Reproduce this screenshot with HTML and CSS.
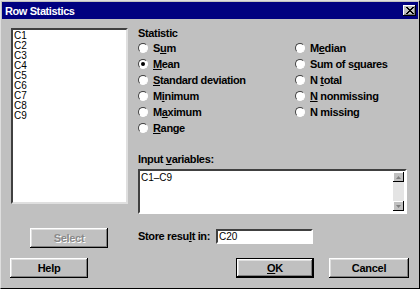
FILE: index.html
```html
<!DOCTYPE html>
<html lang="en">
<head>
    <meta charset="UTF-8">
    <title>Row Statistics</title>
    <link rel="stylesheet" href="styles.css">
</head>
<body>
    <div class="window">
        <div class="titlebar">
            <span class="title">Row Statistics</span>
            <span class="close">
                <svg width="8" height="7" viewBox="0 0 8 7"><path d="M0 0 L7 7 M1 0 L8 7 M7 0 L0 7 M8 0 L1 7" stroke="#000" stroke-width="1"/></svg>
            </span>
        </div>
        <div class="content">
            <div class="left">
                <div class="listbox">
                    <div>C1</div><div>C2</div><div>C3</div><div>C4</div><div>C5</div>
                    <div>C6</div><div>C7</div><div>C8</div><div>C9</div>
                </div>
                <div class="btn select">Select</div>
            </div>
            <div class="right">
                <div class="label">Statistic</div>
                <div class="radios">
                    <div class="radio"><span class="dot"></span><span>S<u>u</u>m</span></div>
                    <div class="radio"><span class="dot"></span><span>M<u>e</u>dian</span></div>
                    <div class="radio"><span class="dot on"></span><span><u>M</u>ean</span></div>
                    <div class="radio"><span class="dot"></span><span>Sum of s<u>q</u>uares</span></div>
                    <div class="radio"><span class="dot"></span><span><u>S</u>tandard deviation</span></div>
                    <div class="radio"><span class="dot"></span><span>N <u>t</u>otal</span></div>
                    <div class="radio"><span class="dot"></span><span>M<u>i</u>nimum</span></div>
                    <div class="radio"><span class="dot"></span><span><u>N</u> nonmissing</span></div>
                    <div class="radio"><span class="dot"></span><span>M<u>a</u>ximum</span></div>
                    <div class="radio"><span class="dot"></span><span>N missing</span></div>
                    <div class="radio"><span class="dot"></span><span><u>R</u>ange</span></div>
                </div>
                <div class="label vars">Input <u>v</u>ariables:</div>
                <div class="field textarea">
                    <span class="value">C1&ndash;C9</span>
                    <div class="scroll">
                        <div class="arrow"><svg width="5" height="3" viewBox="0 0 5 3"><path d="M2.5 0 L5 3 L0 3 Z" fill="#808080"/></svg></div>
                        <div class="arrow"><svg width="5" height="3" viewBox="0 0 5 3"><path d="M0 0 L5 0 L2.5 3 Z" fill="#808080"/></svg></div>
                    </div>
                </div>
                <div class="store">
                    <span class="label">Store resu<u>l</u>t in:</span>
                    <div class="field small">C20</div>
                </div>
            </div>
        </div>
        <div class="footer">
            <div class="btn">Help</div>
            <div class="btn ok"><u>O</u>K</div>
            <div class="btn cancel">Cancel</div>
        </div>
    </div>
</body>
</html>
```

FILE: styles.css
```css
body {
    margin: 0;
    background: #c0c0c0;
    font-family: "Liberation Sans", Arial, sans-serif;
    font-size: 11px;
    color: #000;
}
.window {
    width: 420px;
    height: 289px;
    box-sizing: border-box;
    border: 1px solid;
    border-color: #dfdfdf #000 #000 #dfdfdf;
    display: flex;
    flex-direction: column;
}
.titlebar {
    height: 17px;
    margin: 1px 1px 0 1px;
    background: #000080;
    color: #fff;
    font-weight: bold;
    font-size: 11px;
    letter-spacing: -0.4px;
    display: flex;
    align-items: center;
    justify-content: space-between;
    padding: 0 2px 0 3px;
}
.close {
    width: 13px;
    height: 11px;
    background: #c0c0c0;
    box-shadow: inset -1px -1px #000, inset 1px 1px #fff, inset -2px -2px #808080;
    display: flex;
    align-items: center;
    justify-content: center;
}
.content {
    display: flex;
    gap: 10px;
    padding: 8px 12px 0 10px;
}
.left {
    width: 117px;
    display: flex;
    flex-direction: column;
}
.listbox {
    margin-top: 1px;
    height: 176px;
    box-sizing: border-box;
    background: #fff;
    border: 2px solid;
    border-color: #404040 #dfdfdf #dfdfdf #404040;
    padding: 1px 0 0 1px;
    font-size: 10px;
    line-height: 10px;
}
.btn {
    width: 78px;
    height: 20px;
    box-sizing: border-box;
    display: flex;
    align-items: center;
    justify-content: center;
    font-weight: bold;
    letter-spacing: -0.3px;
    background: #c0c0c0;
    box-shadow: inset -1px -1px #000, inset 1px 1px #fff, inset -2px -2px #808080, inset 2px 2px #dfdfdf;
}
.select {
    margin: 24px 0 0 19px;
    color: #8a8a8a;
    text-shadow: 1px 1px #fff;
}
.right {
    flex: 1;
}
.label {
    font-weight: bold;
    letter-spacing: -0.35px;
    line-height: 13px;
}
.radios {
    display: grid;
    grid-template-columns: 157px 1fr;
    grid-auto-rows: 16px;
}
.radio {
    display: flex;
    align-items: center;
    font-weight: bold;
    letter-spacing: -0.35px;
    white-space: pre;
}
.dot {
    width: 10px;
    height: 10px;
    box-sizing: border-box;
    border-radius: 50%;
    background: #fff;
    border: 1px solid;
    border-color: #404040 #fff #fff #404040;
    margin-right: 5px;
    position: relative;
}
.dot.on::after {
    content: "";
    position: absolute;
    left: 2px;
    top: 2px;
    width: 4px;
    height: 4px;
    border-radius: 50%;
    background: #000;
}
.vars {
    margin-top: 17px;
}
.field {
    background: #fff;
    box-sizing: border-box;
    border: 2px solid;
    border-color: #404040 #fff #fff #404040;
    font-size: 10px;
}
.textarea {
    margin-top: 3px;
    height: 45px;
    display: flex;
    justify-content: space-between;
    padding: 1px 1px 0 1px;
}
.scroll {
    width: 11px;
    margin-bottom: 1px;
    background: #e4e4e4;
    display: flex;
    flex-direction: column;
    justify-content: space-between;
}
.arrow {
    height: 10px;
    background: #c0c0c0;
    box-shadow: inset -1px -1px #000, inset 1px 1px #fff;
    display: flex;
    align-items: center;
    justify-content: center;
}
.store {
    margin-top: 15px;
    display: flex;
    align-items: center;
    gap: 6px;
}
.small {
    width: 97px;
    height: 15px;
    padding-left: 1px;
    line-height: 11px;
}
.footer {
    margin-top: auto;
    padding: 0 10px 10px 9px;
    display: flex;
}
.ok {
    margin-left: auto;
    border: 1px solid #000;
}
.cancel {
    width: 80px;
    margin-left: 15px;
}
```
